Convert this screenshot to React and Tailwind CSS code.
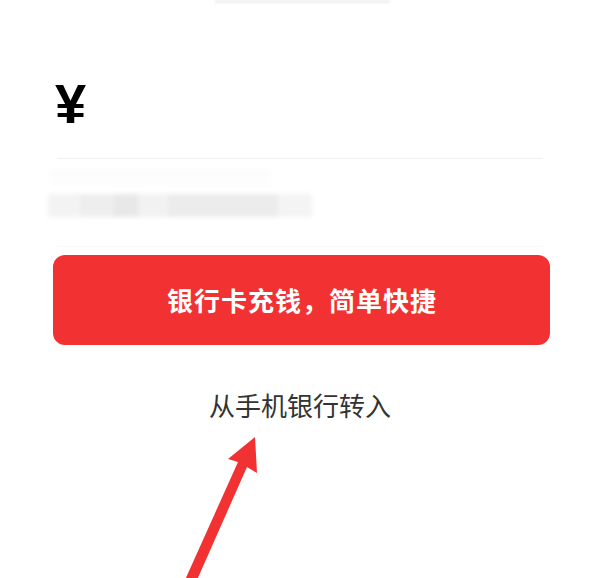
export default function App() {
  const cjk = { fontFamily: '"Noto Sans CJK SC", "Noto Sans", sans-serif' };
  return (
    <div className="relative w-[599px] h-[578px] overflow-hidden bg-white">
      {/* cut-off top text */}
      <div className="h-[4px] pl-[215px]">
        <div className="w-[175px] h-[3px] bg-[#eeeeee] blur-[1px]" />
      </div>

      {/* yen sign */}
      <div className="mt-[72px] pl-[55px] h-[56px]">
        <span
          className="block text-[56px] leading-none font-bold text-black"
          style={{ fontFamily: '"Liberation Sans", Arial, sans-serif' }}
        >
          ¥
        </span>
      </div>

      {/* divider */}
      <div className="mt-[26px] ml-[57px] w-[486px] h-px bg-[#f0f0f0]" />

      {/* faint blurred row */}
      <div className="mt-[11px] ml-[50px] w-[220px] h-[15px] bg-[#fcfcfc] blur-[2px]" />

      {/* blurred placeholder */}
      <div className="mt-[9px] ml-[48px] w-[264px] h-[23px] flex blur-[2px]">
        <div className="w-[32px] bg-[#f3f3f3]" />
        <div className="w-[34px] bg-[#eeeeee]" />
        <div className="w-[24px] bg-[#e8e8e8]" />
        <div className="w-[30px] bg-[#f2f2f2]" />
        <div className="w-[110px] bg-[#ececec]" />
        <div className="w-[34px] bg-[#f4f4f4]" />
      </div>

      {/* faint line */}
      <div className="mt-[29px] ml-[57px] w-[486px] h-px bg-[#f8f8f8]" />

      {/* red button */}
      <div className="mt-[8px] ml-[53px] w-[497px] h-[90px] rounded-[12px] bg-[#f23232] flex items-center justify-center">
        <span
          className="text-[26px] leading-none font-bold text-white tracking-[1px] pl-[1px]"
          style={cjk}
        >
          银行卡充钱，简单快捷
        </span>
      </div>

      {/* link text */}
      <div className="mt-[47px] flex justify-center pl-[1px]">
        <span className="text-[26px] leading-none text-[#333333]" style={cjk}>
          从手机银行转入
        </span>
      </div>

      {/* annotation arrow */}
      <svg
        className="absolute left-0 top-0"
        width="599"
        height="578"
        viewBox="0 0 599 578"
      >
        <polygon
          points="255,437 257,473 247,467 197,580 185,580 238,462 228,459"
          fill="#f23232"
        />
      </svg>
    </div>
  );
}
